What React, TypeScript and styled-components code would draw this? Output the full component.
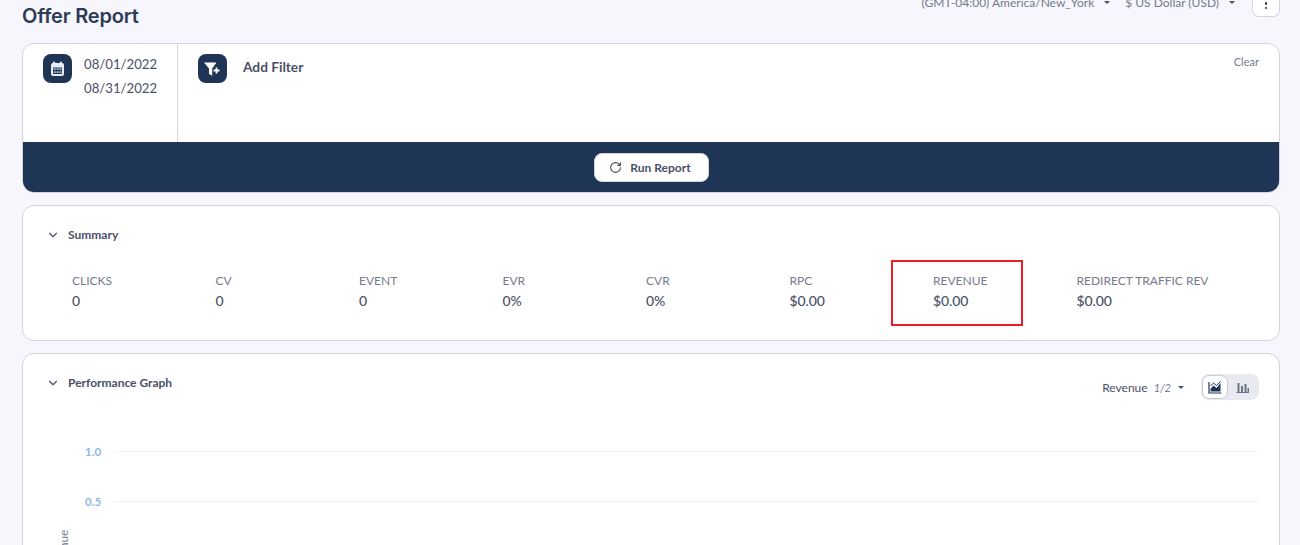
import React from 'react';
import styled, { createGlobalStyle } from 'styled-components';
import { ChevronDown, RotateCw } from 'lucide-react';

const colors = {
  page: '#f6f6fc',
  navy: '#1f3556',
  border: '#d3d5dc',
  text: '#4a5068',
  muted: '#757b8c',
  title: '#2d3b57',
  axis: '#8fb8ea',
  grid: '#f1f2f5',
};

const GlobalStyle = createGlobalStyle`
  html, body {
    margin: 0;
    height: 100%;
    overflow: hidden;
    background: ${colors.page};
    font-family: 'Lato', 'Liberation Sans', sans-serif;
  }
`;

const Page = styled.div`
  height: 545px;
  overflow: hidden;
  padding: 0 20px 0 22px;
`;

const Header = styled.header`
  height: 43px;
  display: flex;
  justify-content: space-between;
  align-items: flex-start;
`;

const Title = styled.h1`
  margin: 4px 0 0;
  font-family: 'Inter', 'Liberation Sans', sans-serif;
  font-size: 20px;
  line-height: 24px;
  font-weight: 600;
  letter-spacing: -0.2px;
  color: ${colors.title};
`;

const HeaderRight = styled.div`
  display: flex;
  align-items: center;
  margin-top: -13px;
`;

const Picker = styled.div<{ $gap: number }>`
  display: flex;
  align-items: center;
  gap: 7px;
  margin-right: ${({ $gap }) => $gap}px;
  padding-top: 1px;
  font-size: 12px;
  color: ${colors.muted};
`;

const Caret = styled.span<{ $offset?: number }>`
  width: 0;
  height: 0;
  margin-left: ${({ $offset }) => $offset ?? 3}px;
  border-left: 3px solid transparent;
  border-right: 3px solid transparent;
  border-top: 3px solid ${colors.text};
`;

const MenuButton = styled.button`
  width: 28px;
  height: 30px;
  padding: 0 0 7px;
  display: flex;
  flex-direction: column;
  align-items: center;
  justify-content: flex-end;
  gap: 2px;
  background: #fff;
  border: 1px solid ${colors.border};
  border-radius: 7px;
  box-sizing: border-box;
`;

const Dot = styled.span`
  width: 2.5px;
  height: 2.5px;
  border-radius: 50%;
  background: ${colors.navy};
`;

const Card = styled.section<{ $height: number }>`
  height: ${({ $height }) => $height}px;
  margin-bottom: 12px;
  box-sizing: border-box;
  background: #fff;
  border: 1px solid ${colors.border};
  border-radius: 12px;
  overflow: hidden;
`;

const FilterCard = styled(Card)`
  display: flex;
  flex-direction: column;
`;

const FilterRow = styled.div`
  flex: 1;
  display: flex;
  min-height: 0;
`;

const DateCell = styled.div`
  width: 134px;
  padding: 10px 0 0 20px;
  display: flex;
  gap: 12px;
  border-right: 1px solid ${colors.border};
`;

const IconTile = styled.div`
  width: 29px;
  height: 29px;
  flex: none;
  display: flex;
  align-items: center;
  justify-content: center;
  border-radius: 8px;
  background: ${colors.navy};
`;

const Dates = styled.div`
  margin-top: -2px;
  font-size: 13.2px;
  line-height: 24px;
  color: ${colors.text};
`;

const AddFilterCell = styled.div`
  flex: 1;
  padding: 10px 20px 0 20px;
  display: flex;
  justify-content: space-between;
  align-items: flex-start;
`;

const AddFilter = styled.div`
  display: flex;
  gap: 16px;
  font-size: 13.7px;
  line-height: 25px;
  font-weight: 700;
  color: ${colors.text};
`;

const Clear = styled.span`
  font-size: 11px;
  line-height: 15px;
  color: ${colors.muted};
`;

const RunBar = styled.div`
  height: 50px;
  flex: none;
  display: flex;
  align-items: center;
  justify-content: center;
  background: ${colors.navy};
`;

const RunButton = styled.button`
  width: 115px;
  height: 29px;
  display: flex;
  align-items: center;
  justify-content: center;
  gap: 8px;
  padding: 0 2px 0 0;
  margin-top: 1px;
  border: 1px solid ${colors.border};
  border-radius: 8px;
  background: #fff;
  font-family: inherit;
  font-size: 12px;
  font-weight: 700;
  color: ${colors.text};
`;

const SectionHead = styled.div`
  display: flex;
  align-items: center;
  gap: 8px;
  padding: 21px 0 0 23px;
  font-size: 12px;
  line-height: 16px;
  font-weight: 700;
  color: ${colors.text};
`;

const StatGrid = styled.div`
  display: grid;
  grid-template-columns: repeat(8, 143.5px);
  margin: 30px 0 0 49px;
`;

const Stat = styled.div<{ $marked?: boolean }>`
  position: relative;
  font-size: 12px;
  line-height: 16px;
  color: ${colors.muted};

  ${({ $marked }) =>
    $marked &&
    `&::after {
      content: '';
      position: absolute;
      left: -42px;
      top: -13px;
      width: 132px;
      height: 66px;
      box-sizing: border-box;
      border: 2.5px solid #ee1c25;
    }`}
`;

const StatValue = styled.div`
  margin-top: 3px;
  font-size: 14px;
  line-height: 18px;
  font-weight: 500;
  letter-spacing: -0.1px;
  color: ${colors.text};
`;

const GraphHead = styled.div`
  display: flex;
  justify-content: space-between;
  align-items: flex-start;
  padding-right: 20px;
`;

const GraphControls = styled.div`
  display: flex;
  align-items: center;
  margin-top: 20px;
  font-size: 12px;
  color: ${colors.text};
`;

const Fraction = styled.em`
  margin-left: 6px;
  font-size: 11px;
  color: ${colors.muted};
`;

const Toggle = styled.div`
  display: flex;
  align-items: center;
  margin-left: 17px;
  width: 58px;
  height: 26px;
  padding: 1px;
  box-sizing: border-box;
  border-radius: 8px;
  background: #e8e9f1;
`;

const ToggleItem = styled.div<{ $active?: boolean }>`
  width: ${({ $active }) => ($active ? 26 : 28)}px;
  height: ${({ $active }) => ($active ? 24 : 22)}px;
  box-sizing: border-box;
  display: flex;
  align-items: center;
  justify-content: center;
  border-radius: 7px;
  ${({ $active }) => $active && `background: #fff; border: 1px solid #c9cbd5;`}
`;

const Chart = styled.div`
  position: relative;
  padding: 26px 20px 0 62px;
`;

const ChartRow = styled.div`
  height: 50px;
  display: flex;
  align-items: center;
  gap: 12px;
  font-size: 11.5px;
  font-weight: 700;
  color: ${colors.axis};
`;

const ChartTick = styled.span`
  width: 17px;
`;

const GridLine = styled.span`
  flex: 1;
  height: 1px;
  background: ${colors.grid};
`;

const AxisLabel = styled.span`
  position: absolute;
  left: 34px;
  top: 175px;
  transform: rotate(-90deg);
  transform-origin: left top;
  font-size: 12px;
  line-height: 14px;
  color: ${colors.muted};
`;

const stats = [
  { label: 'CLICKS', value: '0' },
  { label: 'CV', value: '0' },
  { label: 'EVENT', value: '0' },
  { label: 'EVR', value: '0%' },
  { label: 'CVR', value: '0%' },
  { label: 'RPC', value: '$0.00' },
  { label: 'REVENUE', value: '$0.00', marked: true },
  { label: 'REDIRECT TRAFFIC REV', value: '$0.00' },
];

const CalendarIcon = () => (
  <svg width="15" height="16" viewBox="0 0 15 16">
    <rect x="3" y="0.5" width="2" height="3" rx="1" fill="#e6edf5" />
    <rect x="10" y="0.5" width="2" height="3" rx="1" fill="#e6edf5" />
    <rect x="1" y="2" width="13" height="13" rx="2" fill="#e6edf5" />
    <path d="M3 6.5h9v6.5H3z" fill="#1f3556" />
    <path d="M3.7 7.3h2v1.6h-2zM6.6 7.3h2v1.6h-2zM9.4 7.3h2v1.6h-2zM3.7 10.3h2v1.6h-2zM6.6 10.3h2v1.6h-2zM9.4 10.3h2v1.6h-2z" fill="#9fc0d8" />
  </svg>
);

const FilterIcon = () => (
  <svg width="19" height="16" viewBox="0 0 19 16">
    <path d="M1 1.5h12.5L9.2 7.4v7.4L6 13V7.4z" fill="#fff" />
    <path d="M13.5 6.5v6M10.5 9.5h6" stroke="#fff" strokeWidth="1.8" />
  </svg>
);

const AreaIcon = () => (
  <svg width="14" height="13" viewBox="0 0 14 13">
    <path d="M1 1v11h12.5" fill="none" stroke="#1f3556" strokeWidth="1.2" />
    <path d="M2.5 8l3-3.5 3 2.5 4-5v8.5h-10z" fill="#1f3556" />
    <path d="M2.5 5l3-3 3 2.5 4-4" fill="none" stroke="#1f3556" strokeWidth="1" />
  </svg>
);

const BarsIcon = () => (
  <svg width="13" height="12" viewBox="0 0 13 12">
    <path d="M.5 11.5h12.5" stroke="#6d7488" strokeWidth="1" />
    <path d="M1.5 2h2v9h-2zM5 5h2v6H5zM8.5 3h2v8h-2zM11.5 7h1.5v4h-1.5z" fill="#6d7488" />
  </svg>
);

const App: React.FC = () => {
  return (
    <>
      <GlobalStyle />
      <Page>
        <Header>
          <Title>Offer Report</Title>
          <HeaderRight>
            <Picker $gap={15}>
              (GMT-04:00) America/New_York
              <Caret />
            </Picker>
            <Picker $gap={17}>
              $ US Dollar (USD)
              <Caret />
            </Picker>
            <MenuButton aria-label="More">
              <Dot />
              <Dot />
              <Dot />
            </MenuButton>
          </HeaderRight>
        </Header>

        <FilterCard $height={150}>
          <FilterRow>
            <DateCell>
              <IconTile>
                <CalendarIcon />
              </IconTile>
              <Dates>
                08/01/2022
                <br />
                08/31/2022
              </Dates>
            </DateCell>
            <AddFilterCell>
              <AddFilter>
                <IconTile>
                  <FilterIcon />
                </IconTile>
                Add Filter
              </AddFilter>
              <Clear>Clear</Clear>
            </AddFilterCell>
          </FilterRow>
          <RunBar>
            <RunButton>
              <RotateCw size={13} color={colors.text} strokeWidth={2} />
              Run Report
            </RunButton>
          </RunBar>
        </FilterCard>

        <Card $height={136}>
          <SectionHead>
            <ChevronDown size={14} color={colors.text} strokeWidth={2} />
            Summary
          </SectionHead>
          <StatGrid>
            {stats.map(stat => (
              <Stat key={stat.label} $marked={stat.marked}>
                {stat.label}
                <StatValue>{stat.value}</StatValue>
              </Stat>
            ))}
          </StatGrid>
        </Card>

        <Card $height={300}>
          <GraphHead>
            <SectionHead>
              <ChevronDown size={14} color={colors.text} strokeWidth={2} />
              Performance Graph
            </SectionHead>
            <GraphControls>
              Revenue
              <Fraction>1/2</Fraction>
              <Caret $offset={7} />
              <Toggle>
                <ToggleItem $active>
                  <AreaIcon />
                </ToggleItem>
                <ToggleItem>
                  <BarsIcon />
                </ToggleItem>
              </Toggle>
            </GraphControls>
          </GraphHead>
          <Chart>
            <ChartRow>
              <ChartTick>1.0</ChartTick>
              <GridLine />
            </ChartRow>
            <ChartRow>
              <ChartTick>0.5</ChartTick>
              <GridLine />
            </ChartRow>
            <AxisLabel>Revenue</AxisLabel>
          </Chart>
        </Card>
      </Page>
    </>
  );
};

export default App;
